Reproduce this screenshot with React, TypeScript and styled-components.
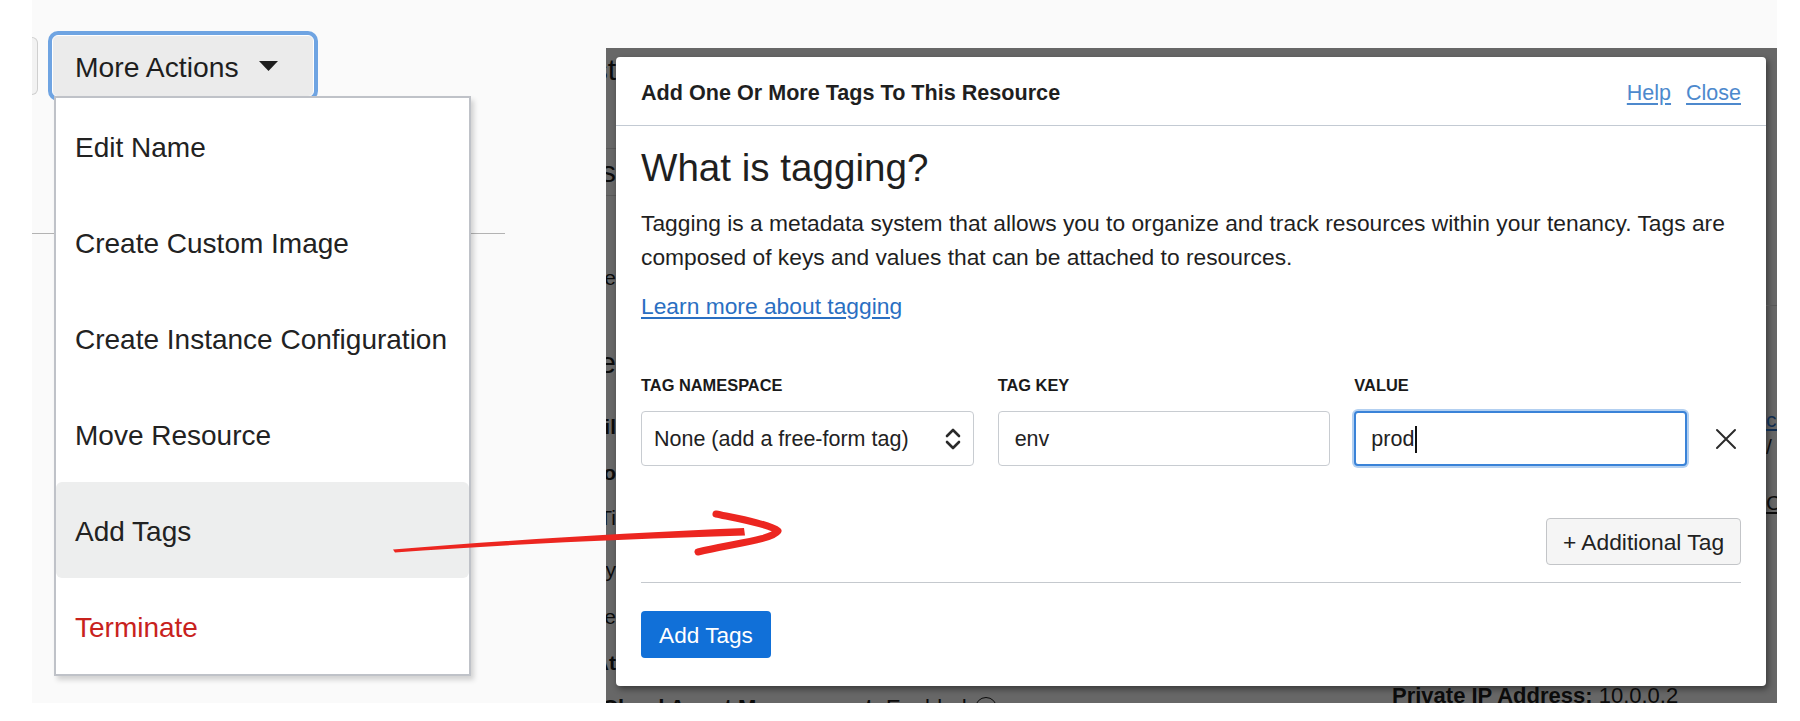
import React from "react";
import styled, { createGlobalStyle } from "styled-components";

const Global = createGlobalStyle`
  html, body { margin: 0; padding: 0; background: #ffffff; }
  body { font-family: "Liberation Sans", Arial, Helvetica, sans-serif; color: #1f1f1f; }
  #root { width: 1800px; height: 721px; }
  * { box-sizing: border-box; }
`;

const FONT = `"Liberation Sans", Arial, Helvetica, sans-serif`;

const Canvas = styled.div`
  position: relative;
  width: 1800px;
  height: 721px;
  overflow: hidden;
  background: #ffffff;
`;

const Stage = styled.div`
  margin-left: 32px;
  width: 1745px;
  height: 703px;
  background: #fafafa;
  display: flex;
`;

/* ---------- left pane: actions dropdown ---------- */

const LeftPane = styled.section`
  width: 574px;
  flex: none;
  display: flex;
  flex-direction: column;
`;

const Toolbar = styled.div`
  margin-top: 35px;
  display: flex;
  align-items: center;
  gap: 14px;
`;

const Stub = styled.div`
  width: 6px;
  height: 58px;
  border: 1px solid #cfcfcf;
  border-left: none;
  border-radius: 0 7px 7px 0;
  background: #f2f2f2;
`;

const ActionsWrap = styled.div`
  position: relative;
`;

const ActionsButton = styled.button`
  width: 262px;
  height: 62px;
  display: flex;
  align-items: center;
  gap: 20px;
  padding: 3px 0 0 22px;
  background: #ebebeb;
  border: 1px solid #ffffff;
  border-radius: 6px;
  box-shadow: 0 0 0 4px #6fa4e2;
  font: 28.3px ${FONT};
  color: #1e1e1e;

  svg { margin-top: -3px; }
`;

const Menu = styled.ul`
  position: absolute;
  left: 2px;
  top: 61px;
  z-index: 2;
  margin: 0;
  padding: 0;
  list-style: none;
  width: 417px;
  border: 2px solid #bfc2c8;
  background: #ffffff;
  box-shadow: 3px 4px 5px rgba(0, 0, 0, 0.16);
`;

const MenuItem = styled.li<{ $active?: boolean; $danger?: boolean }>`
  height: 96px;
  display: flex;
  align-items: center;
  padding: 4px 0 0 19px;
  font-size: 28px;
  color: ${(p) => (p.$danger ? "#c8221d" : "#222222")};
  background: ${(p) => (p.$active ? "#edeeee" : "transparent")};
  border-radius: 6px;
`;

const PageRule = styled.hr`
  margin: 136px 0 0;
  width: 473px;
  border: none;
  border-top: 1px solid #b3b3b3;
`;

/* ---------- right pane: modal over dimmed page ---------- */

const RightPane = styled.section`
  width: 1171px;
  flex: none;
  padding-top: 48px;
`;

const Backdrop = styled.div`
  height: 655px;
  background: #676767;
  display: grid;
  grid-template-columns: 10px 1150px 11px;
  grid-template-rows: 9px 629px 17px;
  grid-template-areas:
    "top top top"
    "left modal right"
    "bottom bottom bottom";
  overflow: hidden;
`;

const SideStrip = styled.div<{ $area: string }>`
  grid-area: ${(p) => p.$area};
  overflow: hidden;
  display: flex;
  flex-direction: column;
`;

const Frag = styled.div<{
  $mt: number;
  $size?: number;
  $bold?: boolean;
  $color?: string;
  $under?: boolean;
  $start?: boolean;
}>`
  flex: none;
  margin-top: ${(p) => p.$mt}px;
  height: 30px;
  line-height: 30px;
  display: flex;
  justify-content: ${(p) => (p.$start ? "flex-start" : "flex-end")};
  white-space: nowrap;
  font-size: ${(p) => p.$size ?? 21}px;
  font-weight: ${(p) => (p.$bold ? 700 : 400)};
  color: ${(p) => p.$color ?? "#0b0b0b"};
  text-decoration: ${(p) => (p.$under ? "underline" : "none")};
`;

const StripRule = styled.div<{ $mt: number }>`
  flex: none;
  margin-top: ${(p) => p.$mt}px;
  height: 1px;
  background: #585858;
`;

const BottomStrip = styled.div`
  grid-area: bottom;
  overflow: hidden;
  display: grid;
  grid-template-columns: 786px 1fr;
  align-items: start;
`;

const BgLine = styled.div<{ $mt: number; $ml?: number }>`
  margin-top: ${(p) => p.$mt}px;
  margin-left: ${(p) => p.$ml ?? 0}px;
  display: flex;
  align-items: center;
  gap: 8px;
  white-space: nowrap;
  font-size: 22px;
  line-height: 26px;
  color: #0b0b0b;
  b { font-weight: 700; }
`;

const InfoDot = styled.span`
  width: 22px;
  height: 22px;
  border: 1.5px solid #0b0b0b;
  border-radius: 50%;
`;

const Modal = styled.div`
  grid-area: modal;
  background: #ffffff;
  border-radius: 4px;
  box-shadow: 2px 3px 6px rgba(0, 0, 0, 0.45);
  display: flex;
  flex-direction: column;
`;

const ModalHeader = styled.header`
  height: 69px;
  flex: none;
  display: flex;
  align-items: center;
  justify-content: space-between;
  padding: 4px 25px 0;
  border-bottom: 1px solid #c3cad3;
`;

const ModalTitle = styled.h2`
  margin: 0;
  font-size: 21.6px;
  font-weight: 700;
  color: #1f1f1f;
`;

const HeaderLinks = styled.nav`
  display: flex;
  gap: 15px;
`;

const HeaderLink = styled.a`
  font-size: 21.5px;
  color: #4d89cd;
  text-decoration: underline;
  text-underline-offset: 3px;
`;

const ModalBody = styled.div`
  padding: 20px 25px 28px;
  display: flex;
  flex-direction: column;
`;

const Heading = styled.h1`
  margin: 0;
  font-size: 38.6px;
  font-weight: 400;
  line-height: 44px;
  color: #1f1f1f;
`;

const Para = styled.p`
  margin: 16px 0 0;
  font-size: 22.8px;
  line-height: 34px;
  color: #1f1f1f;
`;

const LinkLine = styled.p`
  margin: 15px 0 0;
  font-size: 22.8px;
  line-height: 34px;
`;

const TextLink = styled.a`
  color: #2a6fc2;
  text-decoration: underline;
  text-underline-offset: 3px;
`;

const FieldGrid = styled.div`
  margin-top: 52px;
  display: grid;
  grid-template-columns: repeat(3, 1fr) 30px;
  column-gap: 24px;
  row-gap: 16px;
  align-items: center;
`;

const FieldLabel = styled.div`
  font-size: 16.4px;
  font-weight: 700;
  line-height: 20px;
  color: #1a1a1a;
`;

const Box = styled.div<{ $focused?: boolean; $pad?: number }>`
  height: 55px;
  display: flex;
  align-items: center;
  justify-content: space-between;
  padding: 2px 11px 0 ${(p) => p.$pad ?? 16}px;
  border: ${(p) => (p.$focused ? "2px solid #3a83d8" : "1px solid #c8ccd1")};
  box-shadow: ${(p) => (p.$focused ? "0 0 0 2px #b3d0f1" : "none")};
  border-radius: 4px;
  background: #ffffff;
  font-size: 21.5px;
  color: #222222;

  svg { margin-top: -2px; }
`;

const Caret = styled.span`
  width: 1.5px;
  height: 27px;
  margin-left: 1px;
  background: #111111;
`;

const TypedValue = styled.span`
  display: flex;
  align-items: center;
`;

const RemoveButton = styled.button`
  width: 30px;
  height: 30px;
  padding: 0;
  border: none;
  background: none;
  display: flex;
  align-items: center;
  justify-content: center;
`;

const AddRow = styled.div`
  margin-top: 52px;
  display: flex;
  justify-content: flex-end;
`;

const SecondaryButton = styled.button`
  width: 195px;
  height: 47px;
  padding: 2px 0 0;
  border: 1px solid #c3c5c8;
  border-radius: 4px;
  background: #f5f5f5;
  font: 22.8px ${FONT};
  color: #222222;
`;

const Divider = styled.hr`
  margin: 17px 0 0;
  border: none;
  border-top: 1px solid #c5c9ce;
`;

const Footer = styled.div`
  margin-top: 28px;
  display: flex;
`;

const PrimaryButton = styled.button`
  width: 130px;
  height: 47px;
  padding: 2px 0 0;
  border: none;
  border-radius: 4px;
  background: #1170d8;
  font: 22.6px ${FONT};
  color: #ffffff;
`;

const ArrowLayer = styled.svg`
  position: absolute;
  left: 0;
  top: 0;
  z-index: 5;
  pointer-events: none;
`;

const ChevronIcon = () => (
  <svg width="18" height="26" viewBox="0 0 18 26" fill="none">
    <path d="M3 10 L9 4 L15 10" stroke="#2a2a2a" strokeWidth="2.6" strokeLinecap="round" strokeLinejoin="round" />
    <path d="M3 16 L9 22 L15 16" stroke="#2a2a2a" strokeWidth="2.6" strokeLinecap="round" strokeLinejoin="round" />
  </svg>
);

const CloseIcon = () => (
  <svg width="22" height="22" viewBox="0 0 22 22" fill="none">
    <path d="M2 2 L20 20 M20 2 L2 20" stroke="#2b2b2b" strokeWidth="2" strokeLinecap="round" />
  </svg>
);

const DropCaret = () => (
  <svg width="19" height="10" viewBox="0 0 19 10">
    <path d="M0 0 L19 0 L9.5 10 Z" fill="#1e1e1e" />
  </svg>
);

const menuItems = [
  { label: "Edit Name" },
  { label: "Create Custom Image" },
  { label: "Create Instance Configuration" },
  { label: "Move Resource" },
  { label: "Add Tags", active: true },
  { label: "Terminate", danger: true },
];

export default function App() {
  return (
    <>
      <Global />
      <Canvas>
        <Stage>
          <LeftPane>
            <Toolbar>
              <Stub />
              <ActionsWrap>
                <ActionsButton>
                  More Actions
                  <DropCaret />
                </ActionsButton>
                <Menu>
                  {menuItems.map((m) => (
                    <MenuItem key={m.label} $active={m.active} $danger={m.danger}>
                      {m.label}
                    </MenuItem>
                  ))}
                </Menu>
              </ActionsWrap>
            </Toolbar>
            <PageRule />
          </LeftPane>

          <RightPane>
            <Backdrop>
              <SideStrip $area="left">
                <Frag $mt={-2} $size={30}>Inst</Frag>
                <StripRule $mt={63} />
                <Frag $mt={8} $size={30}>Details</Frag>
                <StripRule $mt={8} />
                <Frag $mt={67}>Resource</Frag>
                <Frag $mt={55} $size={30}>Image</Frag>
                <Frag $mt={34} $bold>Avail</Frag>
                <Frag $mt={16} $bold>Fo</Frag>
                <Frag $mt={15}>Ti</Frag>
                <Frag $mt={22}>e.y</Frag>
                <Frag $mt={17}>Shape</Frag>
                <Frag $mt={16} $bold>At</Frag>
              </SideStrip>

              <Modal>
                <ModalHeader>
                  <ModalTitle>Add One Or More Tags To This Resource</ModalTitle>
                  <HeaderLinks>
                    <HeaderLink>Help</HeaderLink>
                    <HeaderLink>Close</HeaderLink>
                  </HeaderLinks>
                </ModalHeader>
                <ModalBody>
                  <Heading>What is tagging?</Heading>
                  <Para>
                    Tagging is a metadata system that allows you to organize and track resources within your tenancy. Tags are
                    composed of keys and values that can be attached to resources.
                  </Para>
                  <LinkLine>
                    <TextLink>Learn more about tagging</TextLink>
                  </LinkLine>
                  <FieldGrid>
                    <FieldLabel>TAG NAMESPACE</FieldLabel>
                    <FieldLabel>TAG KEY</FieldLabel>
                    <FieldLabel>VALUE</FieldLabel>
                    <span />
                    <Box $pad={12}>
                      None (add a free-form tag)
                      <ChevronIcon />
                    </Box>
                    <Box>env</Box>
                    <Box $focused $pad={15}>
                      <TypedValue>
                        prod
                        <Caret />
                      </TypedValue>
                    </Box>
                    <RemoveButton aria-label="Remove tag">
                      <CloseIcon />
                    </RemoveButton>
                  </FieldGrid>
                  <AddRow>
                    <SecondaryButton>+ Additional Tag</SecondaryButton>
                  </AddRow>
                  <Divider />
                  <Footer>
                    <PrimaryButton>Add Tags</PrimaryButton>
                  </Footer>
                </ModalBody>
              </Modal>

              <SideStrip $area="right">
                <StripRule $mt={248} />
                <Frag $mt={99} $start $color="#102c4e" $under>
                  copy
                </Frag>
                <Frag $mt={-3} $start>/</Frag>
                <Frag $mt={26} $start $under>
                  Copy
                </Frag>
              </SideStrip>

              <BottomStrip>
                <BgLine $mt={9} $ml={-4}>
                  <span>
                    <b>Cloud Agent Management:</b> Enabled
                  </span>
                  <InfoDot />
                </BgLine>
                <BgLine $mt={-3}>
                  <span>
                    <b>Private IP Address:</b> 10.0.0.2
                  </span>
                </BgLine>
              </BottomStrip>
            </Backdrop>
          </RightPane>
        </Stage>

        <ArrowLayer width="1800" height="721" viewBox="0 0 1800 721">
          <path
            d="M393 549.5 C 500 541, 620 533, 744 528 L 745 535.5 C 620 539, 500 545, 395 552.5 Z"
            fill="#ec2620"
          />
          <path
            d="M716 514 C 735 518, 770 524, 778 531 C 772 540, 730 544, 698 552"
            stroke="#ec2620"
            strokeWidth="7"
            strokeLinecap="round"
            strokeLinejoin="round"
            fill="none"
          />
        </ArrowLayer>
      </Canvas>
    </>
  );
}
